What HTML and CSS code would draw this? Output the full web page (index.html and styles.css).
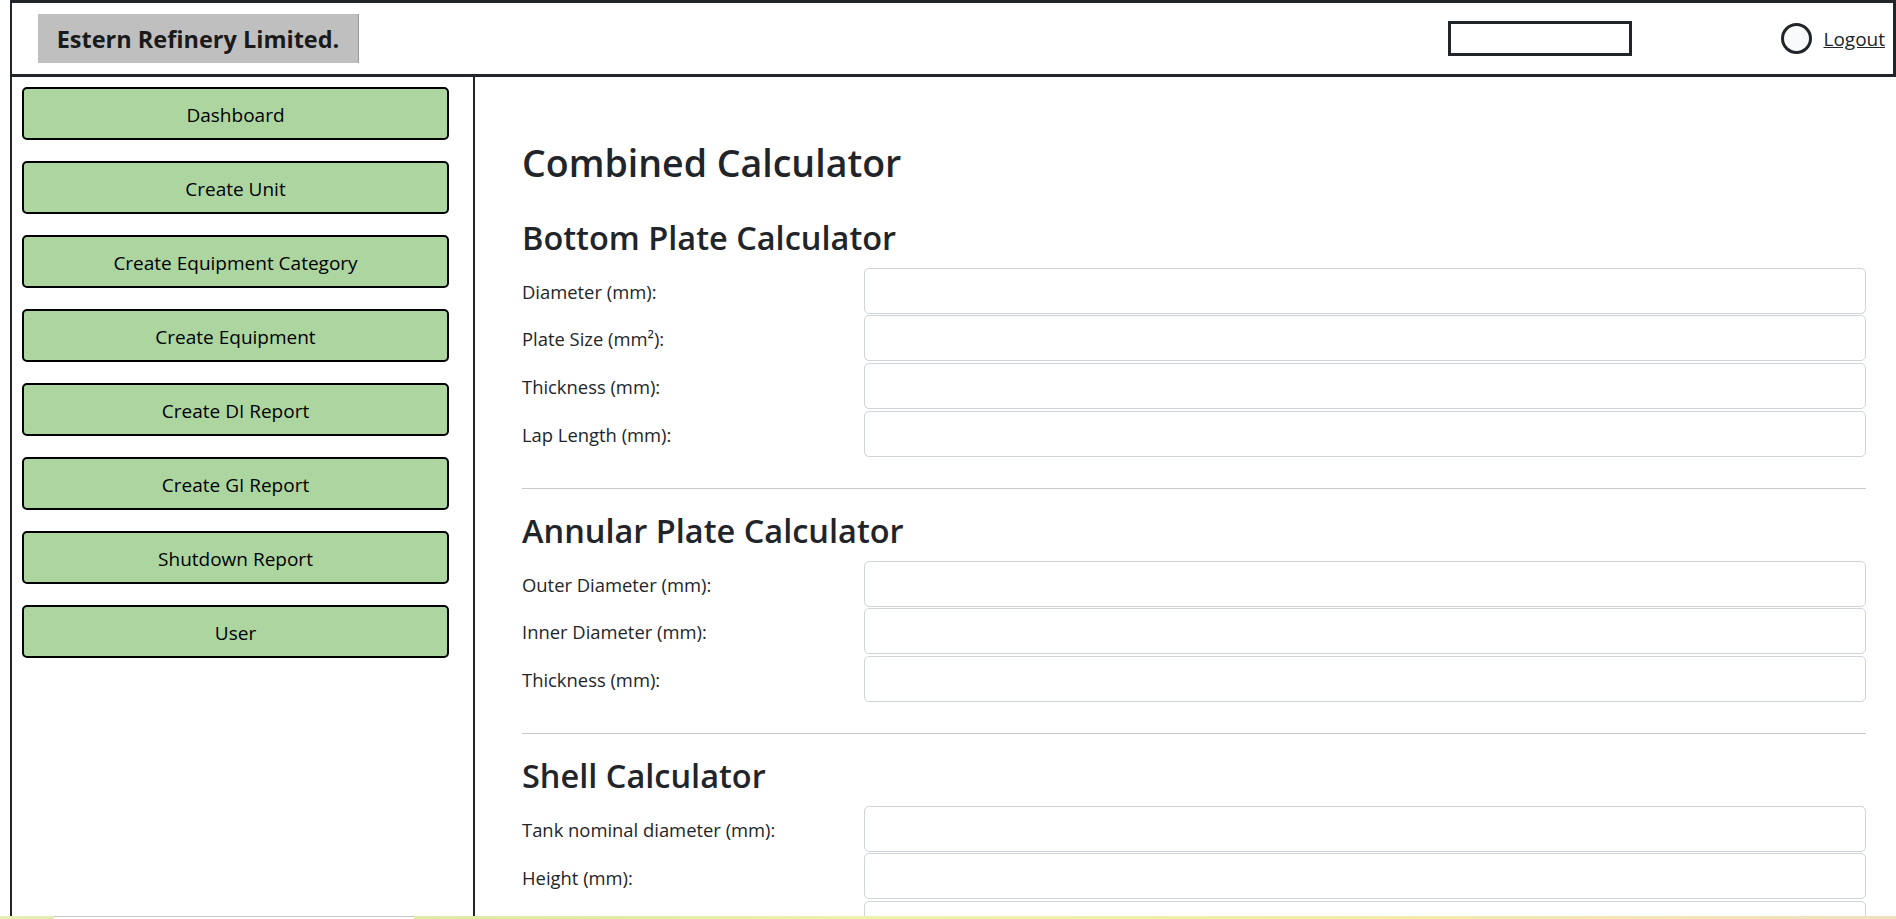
FILE: index.html
```html
<!DOCTYPE html>
<html lang="en">
<head>
<meta charset="utf-8">
<title>Combined Calculator</title>
<link rel="stylesheet" href="styles.css">
</head>
<body>
<div class="page">
  <header class="topbar">
    <div class="brand">Estern Refinery Limited.</div>
    <div class="top-right">
      <input class="search" type="text" aria-label="Search">
      <span class="avatar"></span>
      <a class="logout" href="#">Logout</a>
    </div>
  </header>
  <div class="layout">
    <nav class="sidebar">
      <a class="nav-btn" href="#">Dashboard</a>
      <a class="nav-btn" href="#">Create Unit</a>
      <a class="nav-btn" href="#">Create Equipment Category</a>
      <a class="nav-btn" href="#">Create Equipment</a>
      <a class="nav-btn" href="#">Create DI Report</a>
      <a class="nav-btn" href="#">Create GI Report</a>
      <a class="nav-btn" href="#">Shutdown Report</a>
      <a class="nav-btn" href="#">User</a>
    </nav>
    <main class="content">
      <h2 class="page-title">Combined Calculator</h2>

      <section class="calc">
        <h3 class="calc-title">Bottom Plate Calculator</h3>
        <div class="fields">
          <div class="field"><label>Diameter (mm):</label><input type="text"></div>
          <div class="field"><label>Plate Size (mm²):</label><input type="text"></div>
          <div class="field"><label>Thickness (mm):</label><input type="text"></div>
          <div class="field"><label>Lap Length (mm):</label><input type="text"></div>
        </div>
      </section>
      <hr class="divider">

      <section class="calc">
        <h3 class="calc-title">Annular Plate Calculator</h3>
        <div class="fields">
          <div class="field"><label>Outer Diameter (mm):</label><input type="text"></div>
          <div class="field"><label>Inner Diameter (mm):</label><input type="text"></div>
          <div class="field"><label>Thickness (mm):</label><input type="text"></div>
        </div>
      </section>
      <hr class="divider">

      <section class="calc">
        <h3 class="calc-title">Shell Calculator</h3>
        <div class="fields">
          <div class="field"><label>Tank nominal diameter (mm):</label><input type="text"></div>
          <div class="field"><label>Height (mm):</label><input type="text"></div>
          <div class="field"><label>Thickness (mm):</label><input type="text"></div>
        </div>
      </section>
    </main>
  </div>
</div>
<div class="os-strip"><span class="os-strip-box"></span></div>
</body>
</html>
```

FILE: styles.css
```css
* { box-sizing: border-box; }
html, body { margin: 0; height: 100%; }
body {
  font-family: "Open Sans", "Noto Sans", sans-serif;
  color: #212529;
  background: #fff;
  overflow: hidden;
}
.page {
  margin-left: 10px;
  height: 100vh;
  display: flex;
  flex-direction: column;
}

/* Top bar */
.topbar {
  height: 77px;
  flex: none;
  display: flex;
  align-items: center;
  justify-content: space-between;
  border: solid #212529;
  border-width: 3px 3px 3px 2px;
  padding: 0 8px 0 26px;
}
.brand {
  width: 321px;
  height: 49px;
  background: #bfbfbf;
  border-right: 1px solid #9a9a9a;
  display: flex;
  align-items: center;
  justify-content: center;
  font-weight: 700;
  font-size: 23.5px;
  color: #1a1a1a;
}
.top-right { display: flex; align-items: center; }
.search {
  width: 184px;
  height: 35px;
  border: 3px solid #212529;
  border-radius: 0;
  background: #fff;
  margin-right: 149px;
}
.avatar {
  width: 31px;
  height: 31px;
  border: 3px solid #212529;
  border-radius: 50%;
  background: #f8f9fa;
  margin-right: 11px;
}
.logout {
  font-size: 19px;
  color: #212529;
  text-decoration: underline;
}

/* Layout */
.layout {
  flex: 1;
  min-height: 0;
  display: grid;
  grid-template-columns: 465px 1fr;
}
.sidebar {
  border-left: 2px solid #212529;
  border-right: 2px solid #212529;
  padding: 10px 0 0 10px;
  display: flex;
  flex-direction: column;
  gap: 21px;
}
.nav-btn {
  width: 427px;
  height: 53px;
  flex: none;
  background: #add5a0;
  border: 2px solid #000;
  border-radius: 5px;
  display: flex;
  align-items: center;
  justify-content: center;
  padding-top: 2px;
  font-size: 19px;
  color: #000;
  text-decoration: none;
}

/* Content */
.content {
  padding: 64.2px 30px 0 47px;
  overflow: hidden;
}
.page-title {
  margin: 0 0 33.8px;
  font-size: 37.5px;
  font-weight: 600;
  line-height: 44px;
}
.calc-title {
  margin: 0 0 10.2px;
  font-size: 32.5px;
  font-weight: 600;
  line-height: 38.4px;
}
.fields {
  display: flex;
  flex-direction: column;
  gap: 1.67px;
}
.field {
  display: grid;
  grid-template-columns: 342px 1fr;
  align-items: center;
}
.field label {
  font-size: 18.4px;
  line-height: 1.5;
  padding-top: 2px;
}
.field input {
  height: 46px;
  border: 1px solid #ced4da;
  border-radius: 5px;
  background: #fff;
  font: inherit;
}
.divider {
  margin: 31px 0 23.4px;
  border: 0;
  border-top: 1px solid #c8c9ca;
}

/* bottom OS strip */
.os-strip {
  position: fixed;
  left: 0;
  right: 0;
  bottom: 0;
  height: 3px;
  background: linear-gradient(90deg, #e6efb4 0%, #dfeaa6 30%, #eef2b0 45%, #f1eeaa 70%, #efe0c0 100%);
}
.os-strip-box {
  position: absolute;
  left: 54px;
  top: 0;
  width: 360px;
  height: 3px;
  background: #fff;
  border-top: 1px solid #c8c8c8;
}
```
